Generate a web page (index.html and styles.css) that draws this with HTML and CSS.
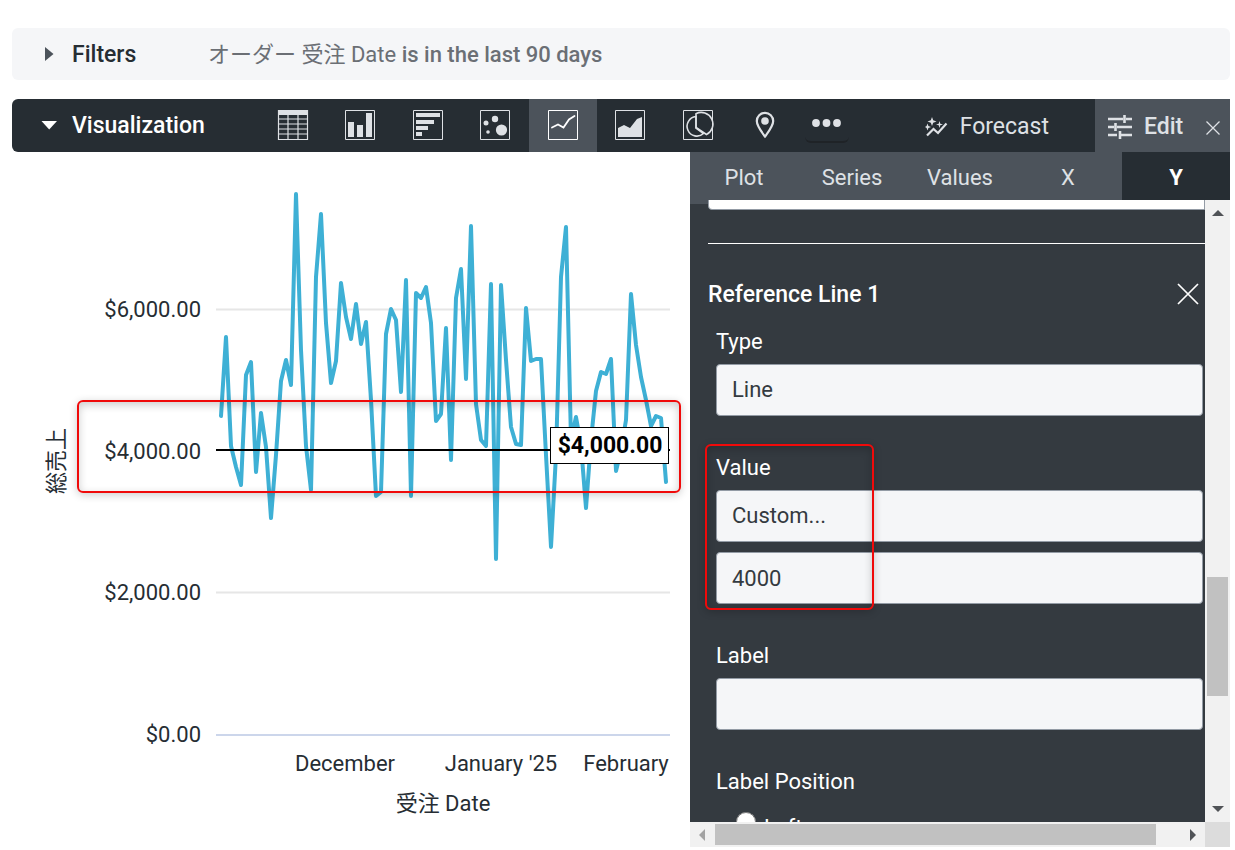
FILE: index.html
```html
<!DOCTYPE html>
<html lang="ja">
<head>
<meta charset="utf-8">
<meta name="viewport" content="width=device-width, initial-scale=1">
<title>Visualization</title>
<link rel="stylesheet" href="styles.css">
</head>
<body>
<main class="app">
  <section class="filters">
    <button class="toggle toggle-filters" type="button">
      <svg class="caret" width="18" height="16" viewBox="0 0 18 16"><path d="M5 0L13.500 7L5 14Z" fill="#4c535b"/></svg>
      <span>Filters</span>
    </button>
    <p class="filter-summary">オーダー 受注 Date <strong>is in the last 90 days</strong></p>
  </section>

  <section class="visualization">
    <header class="toolbar">
      <button class="toggle toggle-vis" type="button">
        <svg class="caret" width="18" height="16" viewBox="0 0 18 16"><path d="M1.500 3H17L9.200 11.500Z" fill="#fff"/></svg>
        <span>Visualization</span>
      </button>
      <nav class="chart-types" aria-label="Chart types">
        <button type="button" aria-label="Table"><svg class="chart-icon" viewBox="0 0 32 32"><path d="M1.500 1.500h29v29h-29zM1.500 10h29M1.500 15h29M1.500 20h29M1.500 25h29M11 5v25M21 5v25" fill="none" stroke="#dee1e5" stroke-width="1.200"/><path d="M1 1h30v5H1z" fill="#dee1e5"/></svg></button>
        <button type="button" aria-label="Column"><svg class="chart-icon" viewBox="0 0 32 32"><path d="M1.500 1.500h29v29h-29z" fill="none" stroke="#dee1e5"/><path d="M4 13h6v15H4zM13 16h6v12h-6zM22 4h6v24h-6z" fill="#dee1e5"/></svg></button>
        <button type="button" aria-label="Bar"><svg class="chart-icon" viewBox="0 0 32 32"><path d="M1.500 1.500h29v29h-29z" fill="none" stroke="#dee1e5"/><path d="M4 4h24v4H4zM4 11h18v4H4zM4 17h12v4H4zM4 23h6v4H4z" fill="#dee1e5"/></svg></button>
        <button type="button" aria-label="Scatterplot"><svg class="chart-icon" viewBox="0 0 32 32"><path d="M1.500 1.500h29v29h-29z" fill="none" stroke="#dee1e5"/><g fill="#dee1e5"><circle cx="7" cy="14" r="2.500"/><circle cx="16" cy="10" r="3.200"/><circle cx="22.500" cy="21" r="5.600"/><circle cx="9" cy="23" r="1.800"/></g></svg></button>
        <button class="active" type="button" aria-label="Line"><svg class="chart-icon" viewBox="0 0 32 32"><path d="M1.500 1.500h29v29h-29z" fill="none" stroke="#fff"/><path d="M5 18.500L11 15.500L16.500 18.500L22 10.500L27.500 7" fill="none" stroke="#fff" stroke-width="1.800" stroke-linecap="round"/></svg></button>
        <button type="button" aria-label="Area"><svg class="chart-icon" viewBox="0 0 32 32"><path d="M1.500 1.500h29v29h-29z" fill="none" stroke="#dee1e5"/><path d="M4 28V19l6-3 6 3 7-9 5-2v20z" fill="#dee1e5"/></svg></button>
        <button type="button" aria-label="Pie"><svg class="chart-icon" viewBox="0 0 32 32"><path d="M1.500 1.500h29v29h-29z" fill="none" stroke="#dee1e5"/><g fill="none" stroke="#dee1e5" stroke-width="1.600"><path d="M14 7.500A9.800 9.800 0 1 0 21.500 24.500L14 19z"/><path d="M14 4.700A11.500 11.500 0 0 1 24.500 25.500L14 18.500z"/></g></svg></button>
        <button type="button" aria-label="Map"><svg class="chart-icon" viewBox="0 0 32 32"><path d="M16 27.500C12 22 7.800 17 7.800 12a8.200 8.200 0 0 1 16.400 0C24.200 17 20 22 16 27.500z" fill="none" stroke="#dee1e5" stroke-width="2.200"/><circle cx="16" cy="12" r="3.800" fill="#dee1e5"/></svg></button>
      </nav>
      <button class="more" type="button" aria-label="More"><svg width="30" height="10" viewBox="0 0 30 10" fill="#dee1e5"><circle cx="4" cy="5" r="3.900"/><circle cx="14.500" cy="5" r="3.900"/><circle cx="25" cy="5" r="3.900"/></svg></button>
      <button class="forecast" type="button">
        <svg width="24" height="20" viewBox="0 0 24 20"><path d="M3 18.500L9.500 12L14 16L22.500 6.500" fill="none" stroke="#dee1e5" stroke-width="2.200"/><path d="M8 0l1.200 3.300L12.500 4.500 9.200 5.700 8 9 6.800 5.700 3.500 4.500 6.800 3.300zM15.500 4l.8 2.700 2.700.8-2.700.8-.8 2.700-.8-2.700-2.700-.8 2.700-.8zM3.500 6.500l.9 2.600 2.600.9-2.600.9-.9 2.600-.9-2.600L1 10l1.600-.9z" fill="#dee1e5"/></svg>
        <span>Forecast</span>
      </button>
      <div class="edit">
        <button class="edit-button" type="button">
          <svg width="24" height="24" viewBox="0 0 24 24"><path d="M0 4h15M18 4h6M16.500 0v8M0 12h6M9 12h15M7.500 8v8M0 20h9M12 20h12M12 16v8" fill="none" stroke="#dee1e5" stroke-width="2.600"/></svg>
          <span>Edit</span>
        </button>
        <button class="edit-close" type="button" aria-label="Close"><svg width="16" height="16" viewBox="0 0 16 16"><path d="M1.500 2.500l13 13M14.500 2.500l-13 13" stroke="#dee1e5" stroke-width="1.300"/></svg></button>
      </div>
    </header>

    <div class="workspace">
      <figure class="chart">
        <svg class="plot" viewBox="12 152 678 695" role="img" aria-label="総売上 by 受注 Date">
          <g fill="none" stroke-width="2">
            <path d="M216 309.500H670M216 592.500H670" stroke="#e6e6e6"/>
            <path d="M216 735H670" stroke="#ccd6eb"/>
          </g>
          <polyline class="series" points="221,416 226,337 231,446 236,467 241,485 246,375 251,362 256,472 261,413 266,447 271,518 276,455 281,381 286,360 291,385 296,194 301,350 306,446 311,490 316,277 321,214 326,323 331,383 336,361 341,283 346,317 351,339 356,304 361,344 366,322 371,400 376,496 381,492 386,334 391,309 396,320 401,392 406,280 411,496 416,293 421,298 426,287 431,323 436,421 441,414 446,328 451,460 456,298 461,269 466,379 471,226 476,404 481,440 486,446 491,284 496,559 501,285 506,360 511,427 516,444 521,445 526,308 531,361 536,359 541,359 546,455 551,547 556,455 561,277 566,227 571,440 576,417 581,445 586,508 591,440 596,391 601,372 606,374 611,359 616,471 621,450 626,420 631,294 636,345 641,377 646,400 651,426 656,416 661,418 666,482"/>
          <path d="M216 450H670" stroke="#000" stroke-width="2"/>
          <rect x="550.500" y="427.500" width="118" height="36" fill="#fff" stroke="#000"/>
          <text class="callout" x="610" y="453">$4,000.00</text>
          <g class="y-labels">
            <text x="201" y="317">$6,000.00</text>
            <text x="201" y="459">$4,000.00</text>
            <text x="201" y="600">$2,000.00</text>
            <text x="201" y="742">$0.00</text>
          </g>
          <g class="x-labels">
            <text x="345" y="771">December</text>
            <text x="501" y="771">January '25</text>
            <text x="626" y="771">February</text>
            <text x="443" y="811">受注 Date</text>
            <text transform="translate(64 461) rotate(-90)">総売上</text>
          </g>
        </svg>
        <span class="highlight highlight-line"></span>
      </figure>

      <aside class="panel">
        <nav class="tabs">
          <a href="#plot">Plot</a><a href="#series">Series</a><a href="#values">Values</a><a href="#x">X</a><a class="current" href="#y">Y</a>
        </nav>
        <div class="scroll-area">
          <form class="fields">
            <div class="scrolled-field"><input type="text" aria-label="Previous field"></div>
            <hr>
            <div class="heading">
              <h2>Reference Line 1</h2>
              <button type="button" aria-label="Remove"><svg width="22" height="22" viewBox="0 0 22 22"><path d="M1 1l20 20M21 1L1 21" stroke="#fff" stroke-width="1.700"/></svg></button>
            </div>
            <div class="field">
              <label for="type">Type</label>
              <select id="type"><option>Line</option></select>
            </div>
            <div class="field">
              <label for="value">Value</label>
              <select id="value"><option>Custom...</option></select>
              <input type="text" value="4000" aria-label="Custom value">
              <span class="highlight highlight-value"></span>
            </div>
            <div class="field">
              <label for="label">Label</label>
              <input id="label" type="text">
            </div>
            <fieldset class="field">
              <legend>Label Position</legend>
              <label class="radio"><input type="radio" name="position"><span>Left</span></label>
            </fieldset>
          </form>
          <div class="bar-v">
            <svg width="12" height="6" viewBox="0 0 12 6"><path d="M0 6L6 0L12 6z" fill="#505357"/></svg>
            <div class="thumb-v"></div>
            <svg width="12" height="6" viewBox="0 0 12 6"><path d="M0 0L6 6L12 0z" fill="#505357"/></svg>
          </div>
          <div class="bar-h">
            <svg width="6" height="12" viewBox="0 0 6 12"><path d="M6 0L0 6L6 12z" fill="#a3a3a3"/></svg>
            <div class="thumb-h"></div>
            <svg width="6" height="12" viewBox="0 0 6 12"><path d="M0 0L6 6L0 12z" fill="#505357"/></svg>
          </div>
          <div class="corner"></div>
        </div>
      </aside>
    </div>
  </section>
</main>
</body>
</html>
```

FILE: styles.css
```css
* { box-sizing: border-box; }

body {
  margin: 0;
  background: #fff;
  color: #262d33;
  font: 22px/28px Roboto, "Noto Sans CJK JP", sans-serif;
}

button {
  margin: 0;
  padding: 0;
  border: 0;
  background: none;
  color: inherit;
  font: inherit;
}

svg { display: block; flex: none; }

.app {
  display: flex;
  flex-direction: column;
  gap: 19px;
  height: 100vh;
  padding: 28px 5px 3px 12px;
}

.filters {
  display: flex;
  align-items: center;
  height: 52px;
  flex: none;
  padding-top: 2px;
  border-radius: 6px;
  background: #f5f6f8;
}

.toggle {
  display: flex;
  align-items: center;
  gap: 14px;
  padding-left: 28px;
  font-size: 23px;
  font-weight: 500;
}

.toggle-filters { width: 196px; }
.toggle-vis { width: 247px; color: #fff; }

.filter-summary { margin: 0; color: #6b6f75; }
.filter-summary strong { font-weight: 500; }

.visualization {
  display: flex;
  flex: 1;
  flex-direction: column;
  min-height: 0;
}

.toolbar {
  display: flex;
  height: 53px;
  flex: none;
  overflow: hidden;
  border-radius: 6px 0 0 6px;
  background: #262d33;
  color: #dee1e5;
}

.chart-types { display: flex; width: 540px; }

.chart-types button {
  display: flex;
  flex: 1;
  align-items: center;
  justify-content: center;
  padding-bottom: 2px;
}

.chart-types .active { background: #4c535b; }
.chart-icon { width: 32px; height: 32px; }

.more {
  display: flex;
  align-items: center;
  justify-content: center;
  width: 44px;
  height: 38px;
  margin: 6px 0 0 6px;
  border-bottom: 2px solid #1f2327;
  border-radius: 6px;
}

.forecast {
  display: flex;
  align-items: center;
  gap: 12px;
  margin-left: auto;
  padding: 2px 46px 0 0;
  font-size: 23px;
}

.edit {
  display: flex;
  align-items: center;
  justify-content: space-between;
  width: 135px;
  padding: 2px 9px 0 13px;
  background: #4c535b;
}

.edit-button {
  display: flex;
  align-items: center;
  gap: 12px;
  font-size: 23px;
  font-weight: 500;
}

.workspace {
  display: flex;
  flex: 1;
  min-height: 0;
}

.chart {
  position: relative;
  flex: 678;
  min-width: 0;
  margin: 0;
}

.plot { width: 100%; height: auto; }

.series {
  fill: none;
  stroke: #3eb0d5;
  stroke-width: 4px;
  stroke-linecap: round;
  stroke-linejoin: round;
}

.plot text { fill: #262d33; font-size: 22px; }
.plot .callout { fill: #000; font-size: 23px; font-weight: 700; text-anchor: middle; }
.y-labels { text-anchor: end; }
.x-labels { text-anchor: middle; }

.highlight {
  position: absolute;
  border: 2px solid #f00a0a;
  border-radius: 6px;
  box-shadow: 0 2px 8px rgba(0, 0, 0, 0.2), inset 0 3px 8px rgba(0, 0, 0, 0.2);
  pointer-events: none;
}

.highlight-line { top: 248px; left: 65px; right: 9px; height: 93px; }
.highlight-value { top: -10px; left: -11px; width: 169px; height: 166px; }

.panel {
  display: flex;
  flex: 540;
  flex-direction: column;
  min-width: 0;
}

.tabs {
  display: grid;
  grid-template-columns: 1fr 1fr 1fr 1fr 1fr;
  height: 48px;
  flex: none;
  background: #4c535b;
}

.tabs a {
  display: flex;
  align-items: center;
  justify-content: center;
  padding-top: 4px;
  color: #dee1e5;
  font-size: 22px;
  text-decoration: none;
}

.tabs .current { background: #262d33; color: #fff; font-weight: 700; }

.scroll-area {
  display: grid;
  flex: 1;
  grid-template-columns: 1fr 25px;
  grid-template-rows: 1fr 25px;
  min-height: 0;
}

.fields {
  min-height: 0;
  overflow: hidden;
  padding-left: 18px;
  background: linear-gradient(#4c535b 4px, #343a40 4px);
  color: #fff;
}

.scrolled-field {
  display: flex;
  align-items: flex-end;
  height: 10px;
  margin-bottom: 33px;
  overflow: hidden;
}

.scrolled-field input[type="text"] { background: #fff; border-radius: 0 0 0 4px; }

hr { margin: 0; border: 0; border-top: 1px solid #fff; }

.heading {
  display: flex;
  align-items: center;
  justify-content: space-between;
  padding: 36px 6px 20px 0;
}

.heading h2 { margin: 0; padding-top: 2px; font-size: 23px; font-weight: 500; line-height: 26px; }

.field {
  position: relative;
  display: flex;
  flex-direction: column;
  margin: 0 2px 38px 8px;
  padding: 0;
  border: 0;
}

.field > label, .field legend { margin-bottom: 8px; padding: 0; font-size: 22px; }

input[type="text"], select {
  width: 100%;
  height: 52px;
  flex: none;
  padding: 0 15px;
  border: 1px solid #939ba5;
  border-radius: 4px;
  background: #f5f6f8;
  color: #343a40;
  font: inherit;
  appearance: none;
}

.field select + input[type="text"] { margin-top: 10px; }

.field .radio {
  display: flex;
  align-items: flex-start;
  gap: 8px;
  padding: 8px 0 0 20px;
}

.radio input { width: 20px; height: 20px; margin: 0; }
.radio span { padding-top: 2px; }

.bar-v {
  display: flex;
  flex-direction: column;
  align-items: center;
  justify-content: space-between;
  padding: 10px 0;
  background: #f1f1f1;
}

.thumb-v {
  width: 21px;
  height: 119px;
  margin-top: 250px;
  background: #c1c1c1;
}

.bar-h {
  display: flex;
  align-items: center;
  gap: 10px;
  padding: 0 9px;
  background: #f1f1f1;
}

.thumb-h {
  flex: 1;
  height: 21px;
  margin-right: 24px;
  background: #c1c1c1;
}

.corner { background: #dcdcdc; }
```
